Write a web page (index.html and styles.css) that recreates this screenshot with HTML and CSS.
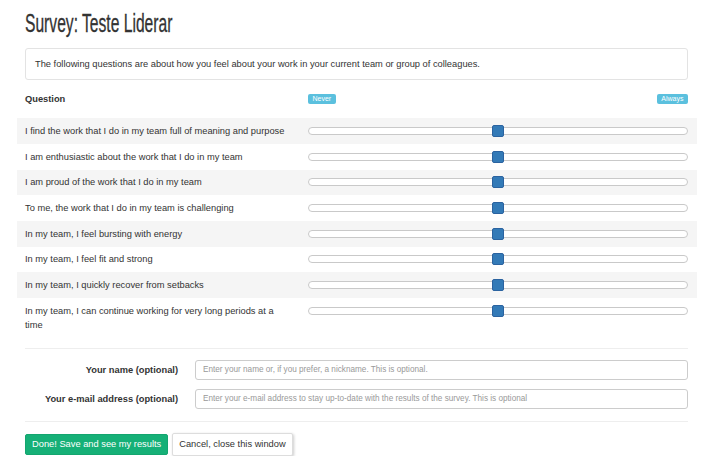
FILE: index.html
```html
<!DOCTYPE html>
<html lang="en">
<head>
  <meta charset="UTF-8" />
  <title>Survey: Teste Liderar</title>
  <link rel="stylesheet" href="styles.css">
</head>
<body>
  <div class="page">
    <h1 class="title"><span>Survey: Teste Liderar</span></h1>

    <div class="intro">
      The following questions are about how you feel about your work in your current team or group of colleagues.
    </div>

    <div class="survey">
      <div class="row head">
        <div class="cell q-title">Question</div>
        <div class="cell scale-labels">
          <span class="badge">Never</span>
          <span class="badge">Always</span>
        </div>
      </div>

      <div class="row">
        <div class="cell">I find the work that I do in my team full of meaning and purpose</div>
        <div class="cell"><div class="slider"><span class="handle"></span></div></div>
      </div>
      <div class="row">
        <div class="cell">I am enthusiastic about the work that I do in my team</div>
        <div class="cell"><div class="slider"><span class="handle"></span></div></div>
      </div>
      <div class="row">
        <div class="cell">I am proud of the work that I do in my team</div>
        <div class="cell"><div class="slider"><span class="handle"></span></div></div>
      </div>
      <div class="row">
        <div class="cell">To me, the work that I do in my team is challenging</div>
        <div class="cell"><div class="slider"><span class="handle"></span></div></div>
      </div>
      <div class="row">
        <div class="cell">In my team, I feel bursting with energy</div>
        <div class="cell"><div class="slider"><span class="handle"></span></div></div>
      </div>
      <div class="row">
        <div class="cell">In my team, I feel fit and strong</div>
        <div class="cell"><div class="slider"><span class="handle"></span></div></div>
      </div>
      <div class="row">
        <div class="cell">In my team, I quickly recover from setbacks</div>
        <div class="cell"><div class="slider"><span class="handle"></span></div></div>
      </div>
      <div class="row">
        <div class="cell">In my team, I can continue working for very long periods at a<br>time</div>
        <div class="cell"><div class="slider"><span class="handle"></span></div></div>
      </div>
    </div>

    <form class="details">
      <hr />
      <div class="field">
        <label for="name">Your name (optional)</label>
        <input type="text" id="name" placeholder="Enter your name or, if you prefer, a nickname. This is optional." />
      </div>
      <div class="field">
        <label for="email">Your e-mail address (optional)</label>
        <input type="text" id="email" placeholder="Enter your e-mail address to stay up-to-date with the results of the survey. This is optional" />
      </div>
      <hr />
      <div class="actions">
        <button type="submit" class="btn-save">Done! Save and see my results</button>
        <button type="button" class="btn-cancel">Cancel, close this window</button>
      </div>
    </form>
  </div>
</body>
</html>
```

FILE: styles.css
```css
body {
  margin: 0;
  font-family: "Liberation Sans", Arial, sans-serif;
  font-size: 9.3px;
  line-height: 14.3px;
  color: #333;
  background: #fff;
}
.page {
  width: 680px;
  margin-left: 17px;
}
.title {
  margin: 0;
  padding: 9px 8px 0;
  height: 39px;
  box-sizing: border-box;
  font-family: "Liberation Sans", Arial, sans-serif;
  font-weight: 400;
  font-size: 25px;
  line-height: 28px;
  color: #333;
  white-space: nowrap;
}
.title span {
  display: inline-block;
  transform: scaleX(0.625);
  transform-origin: left center;
  -webkit-text-stroke: 0.3px #333;
}
.intro {
  margin: 9px 9px 0 8px;
  padding: 8px 9px;
  border: 1px solid #e3e3e3;
  border-radius: 3px;
}
.survey {
  margin-top: 8px;
}
.row {
  display: grid;
  grid-template-columns: 283px 1fr;
}
.row:nth-child(even) {
  background: #f5f5f5;
}
.cell {
  padding: 5.7px 9px 5.7px 8px;
}
.row.head {
  height: 30px;
}
.row.head .cell {
  padding-top: 4px;
}
.q-title {
  font-weight: bold;
}
.scale-labels {
  display: flex;
  justify-content: space-between;
  align-items: flex-start;
  padding-top: 6px !important;
}
.badge {
  display: inline-block;
  background: #5bc0de;
  color: #fff;
  font-size: 7px;
  line-height: 10px;
  padding: 0 4.5px;
  border-radius: 2px;
}
.slider {
  position: relative;
  height: 8px;
  margin-top: 3px;
  box-sizing: border-box;
  border: 1px solid #c9c9c9;
  border-radius: 4px;
  background: #fff;
}
.handle {
  position: absolute;
  left: 50%;
  top: -3px;
  width: 12px;
  height: 12px;
  margin-left: -6px;
  box-sizing: border-box;
  background: #337ab7;
  border: 1px solid #2b63a0;
  border-radius: 2px;
}
.details hr {
  margin: 10px 9px 0 8px;
  border: 0;
  border-top: 1px solid #eee;
}
.details hr + .field {
  margin-top: 11px;
}
.field {
  display: grid;
  grid-template-columns: 170px 1fr;
  align-items: center;
  margin-top: 9px;
}
.field label {
  text-align: right;
  font-weight: bold;
  padding-right: 9px;
}
.field input {
  margin: 0 9px 0 8px;
  height: 20px;
  box-sizing: border-box;
  padding: 0 7px;
  border: 1px solid #ccc;
  border-radius: 3px;
  font-family: "Liberation Sans", Arial, sans-serif;
  font-size: 8.2px;
  color: #555;
}
.field input::placeholder {
  color: #999;
}
.field + hr {
  margin-top: 12px;
}
.actions {
  display: flex;
  align-items: center;
  gap: 4px;
  margin: 11px 0 0 8px;
}
.actions button {
  font-family: "Liberation Sans", Arial, sans-serif;
  font-size: 9.3px;
  line-height: 14px;
  border-radius: 2px;
  cursor: pointer;
}
.btn-save {
  height: 21px;
  padding: 0 6px;
  background: #16b077;
  border: 1px solid #14a56f;
  color: #fff;
}
.btn-cancel {
  height: 23px;
  padding: 0 6px;
  background: #fff;
  border: 1px solid #ddd;
  color: #333;
  box-shadow: 1px 1px 3px rgba(0, 0, 0, 0.2);
}
```
